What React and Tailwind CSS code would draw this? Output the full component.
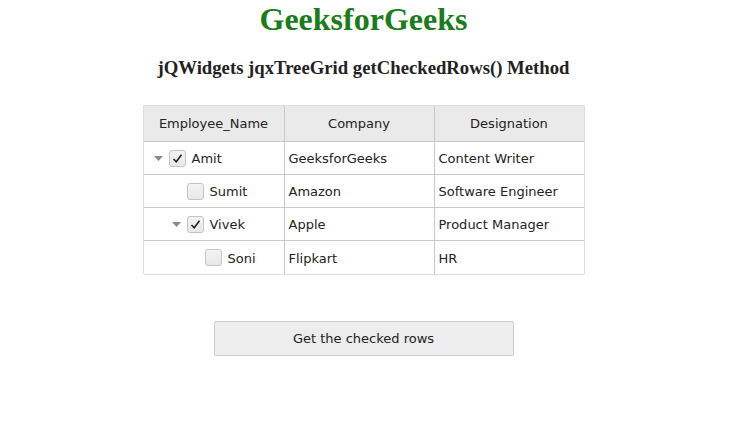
import React from "react";

const rows = [
  { name: "Amit", company: "GeeksforGeeks", des: "Content Writer", level: 0, arrow: true, checked: true },
  { name: "Sumit", company: "Amazon", des: "Software Engineer", level: 1, arrow: false, checked: false },
  { name: "Vivek", company: "Apple", des: "Product Manager", level: 1, arrow: true, checked: true },
  { name: "Soni", company: "Flipkart", des: "HR", level: 2, arrow: false, checked: false },
];

const indentClass = ["pl-[5px]", "pl-[23px]", "pl-[41px]"];

function Checkbox({ checked }) {
  return (
    <div className="w-[17px] h-[17px] rounded-[3px] border border-[#c4c4c4] bg-gradient-to-b from-[#f4f4f4] to-[#e8e8e8] flex items-center justify-center shrink-0">
      {checked && (
        <svg width="11" height="11" viewBox="0 0 11 11">
          <path d="M1.5 6 L4.2 8.8 L9.5 1.8" fill="none" stroke="#222" strokeWidth="1.6" />
        </svg>
      )}
    </div>
  );
}

export default function App() {
  return (
    <div className="w-[751px] h-[443px] bg-white">
      <div className="w-[727px] flex flex-col items-center">
        <h1 className="mt-[1px] text-[32px] leading-[36px] font-bold text-[#1b7c1b] [font-family:'Liberation_Serif',serif]">
          GeeksforGeeks
        </h1>
        <h3 className="mt-[20px] text-[18.72px] leading-[22px] font-bold text-[#222] [font-family:'Liberation_Serif',serif]">
          jQWidgets jqxTreeGrid getCheckedRows() Method
        </h3>
        <div className="mt-[26px] w-[442px] border border-[#dcdcdc] rounded-[2px] text-[13px] text-[#222] [font-family:'DejaVu_Sans',sans-serif]">
          <div className="grid grid-cols-[141px_150px_149px] h-[36px] bg-[#eaeaea] border-b border-[#c8c8c8]">
            <div className="flex items-center justify-center border-r border-[#c8c8c8]">Employee_Name</div>
            <div className="flex items-center justify-center border-r border-[#c8c8c8]">Company</div>
            <div className="flex items-center justify-center">Designation</div>
          </div>
          {rows.map((r, i) => (
            <div
              key={r.name}
              className={`grid grid-cols-[141px_150px_149px] h-[33px] ${i < rows.length - 1 ? "border-b border-[#c8c8c8]" : ""}`}
            >
              <div className={`flex items-center border-r border-[#c8c8c8] ${indentClass[r.level]}`}>
                <div className="w-[20px] h-[17px] flex items-center justify-center shrink-0">
                  {r.arrow && (
                    <svg width="9" height="5" viewBox="0 0 9 5">
                      <path d="M0 0 L9 0 L4.5 5 Z" fill="#8a8a8a" />
                    </svg>
                  )}
                </div>
                <Checkbox checked={r.checked} />
                <span className="ml-[6px] pt-[2px]">{r.name}</span>
              </div>
              <div className="flex items-center pl-[4px] pt-[2px] border-r border-[#c8c8c8]">{r.company}</div>
              <div className="flex items-center pl-[4px] pt-[2px]">{r.des}</div>
            </div>
          ))}
        </div>
        <button className="mt-[46px] w-[300px] h-[35px] bg-[#ededed] border border-[#cdcdcd] rounded-[2px] text-[13px] text-[#222] [font-family:'DejaVu_Sans',sans-serif]">
          Get the checked rows
        </button>
      </div>
    </div>
  );
}
